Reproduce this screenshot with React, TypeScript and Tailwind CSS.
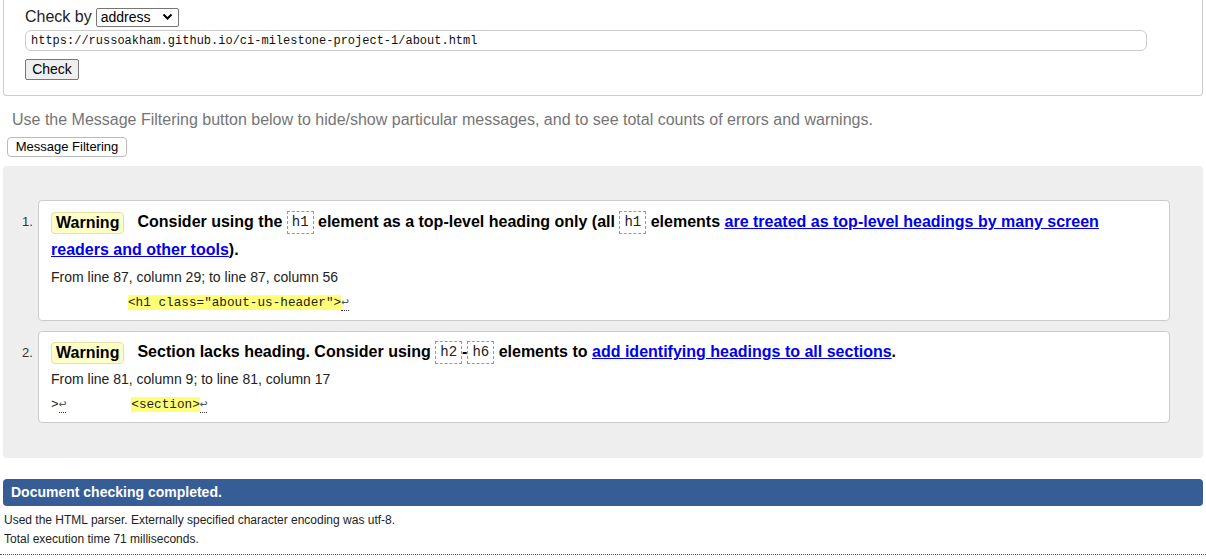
import React from 'react';

const sans = { fontFamily: '"Liberation Sans", Arial, sans-serif' };
const mono = '[font-family:"Liberation_Mono",monospace]';

const Tag: React.FC<{ children: React.ReactNode }> = ({ children }) => (
  <code className={`${mono} inline-block border border-dashed border-[#999] px-[4px] text-[14px] font-normal leading-[21px] text-[#222] align-middle`}>
    {children}
  </code>
);

const Badge: React.FC = () => (
  <span className="inline-block rounded-[4px] border border-[#e5dfa8] bg-[#ffffc8] px-[4px] text-[16px] font-bold leading-[20px] text-black align-middle mr-[13px]">
    Warning
  </span>
);

const Ret: React.FC = () => (
  <span className="border-b border-dotted border-[#333] text-[#555]">↩</span>
);

const App: React.FC = () => {
  return (
    <div className="bg-white min-h-[559px] w-[1206px] text-[#222]" style={sans}>
      {/* form */}
      <div className="mx-[3px] h-[96px] rounded-b-[4px] border-x border-b border-[#ccc] pl-[21px] pr-[55px] pt-[7px]">
        <div className="flex items-center h-[20px]">
          <span className="text-[16px] leading-[20px] text-[#222]">Check by</span>
          <div className="ml-[4px] flex h-[19px] w-[83px] items-center justify-between rounded-[2px] border border-[#767676] pl-[4px] pr-[5px] text-[14px] text-black">
            <span>address</span>
            <svg width="11" height="8" viewBox="0 0 11 8"><path d="M1.5 1.5 L5.5 5.5 L9.5 1.5" stroke="#000" strokeWidth="2" fill="none" /></svg>
          </div>
        </div>
        <div className={`mt-[3px] flex h-[21px] items-center rounded-[6px] border border-[#ccc] px-[5px] ${mono} text-[12px] text-[#111]`}>
          https://russoakham.github.io/ci-milestone-project-1/about.html
        </div>
        <button className="mt-[8px] h-[21px] w-[54px] rounded-[2px] border border-[#767676] bg-[#efefef] text-[14px] leading-[19px] text-black">
          Check
        </button>
      </div>

      <p className="mt-[14px] ml-[12px] text-[16px] leading-[20px] text-[#757575]">
        Use the Message Filtering button below to hide/show particular messages, and to see total counts of errors and warnings.
      </p>
      <button className="ml-[7px] mt-[7px] h-[20px] w-[120px] rounded-[4px] border border-[#bbb] bg-white text-[13px] leading-[18px] text-black">
        Message Filtering
      </button>

      {/* results */}
      <div className="mx-[3px] mt-[8px] h-[292px] rounded-[4px] bg-[#eeeeee] pt-[34px] pl-[35px] pr-[33px]">
        <ol className="flex flex-col gap-[10px]">
          <li className="flex">
            <span className="w-0 -ml-[16px] mr-[16px] pt-[15px] text-[13px] leading-[14px] text-[#333]">1.</span>
            <div className="h-[121px] flex-1 rounded-[4px] border border-[#ccc] bg-white pl-[12px] pr-[60px] pt-[7px]">
              <p className="text-[16px] font-bold leading-[28px] text-black">
                <Badge />
                Consider using the <Tag>h1</Tag> element as a top-level heading only (all <Tag>h1</Tag> elements{' '}
                <a className="text-[#0000ee] underline">are treated as top-level headings by many screen readers and other tools</a>).
              </p>
              <p className="mt-[4px] text-[14px] leading-[18px] text-[#222]">From line 87, column 29; to line 87, column 56</p>
              <p className={`mt-[7px] ${mono} whitespace-pre text-[12.7px] leading-[19px] text-[#222]`}>
                <span className="ml-[77px] bg-[#ffff77]">&lt;h1 class="about-us-header"&gt;</span>
                <Ret />
              </p>
            </div>
          </li>
          <li className="flex">
            <span className="w-0 -ml-[16px] mr-[16px] pt-[15px] text-[13px] leading-[14px] text-[#333]">2.</span>
            <div className="h-[92px] flex-1 rounded-[4px] border border-[#ccc] bg-white pl-[12px] pr-[60px] pt-[6px]">
              <p className="text-[16px] font-bold leading-[28px] text-black">
                <Badge />
                Section lacks heading. Consider using <Tag>h2</Tag>-<Tag>h6</Tag> elements to{' '}
                <a className="text-[#0000ee] underline">add identifying headings to all sections</a>.
              </p>
              <p className="mt-[4px] text-[14px] leading-[18px] text-[#222]">From line 81, column 9; to line 81, column 17</p>
              <p className={`mt-[7px] ${mono} whitespace-pre text-[12.7px] leading-[19px] text-[#222]`}>
                &gt;<Ret />
                <span className="ml-[65px] bg-[#ffff77]">&lt;section&gt;</span>
                <Ret />
              </p>
            </div>
          </li>
        </ol>
      </div>

      <div className="mx-[3px] mt-[21px] flex h-[27px] items-center rounded-[4px] bg-[#365d95] pl-[8px] text-[14px] font-bold text-white">
        Document checking completed.
      </div>
      <p className="mt-[6px] ml-[4px] text-[12px] leading-[16px] text-[#222]">
        Used the HTML parser. Externally specified character encoding was utf-8.
      </p>
      <p className="mt-[3px] ml-[4px] text-[12px] leading-[16px] text-[#222]">Total execution time 71 milliseconds.</p>
      <div className="mt-[7px] border-t border-dotted border-[#555]" />
    </div>
  );
};

export default App;
